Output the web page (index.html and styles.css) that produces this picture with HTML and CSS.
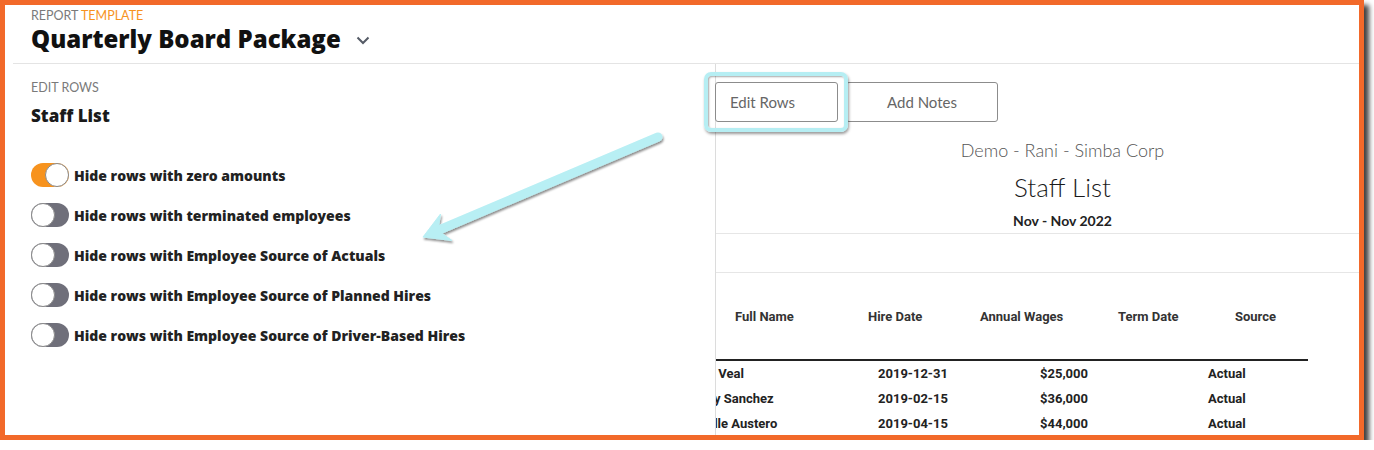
FILE: index.html
```html
<!DOCTYPE html>
<html lang="en">
<head>
    <meta charset="UTF-8">
    <title>Quarterly Board Package - Edit Rows</title>
    <link rel="stylesheet" href="styles.css">
</head>
<body>
    <div class="frame">
        <div class="top">
            <div class="kicker">Report <span class="accent">Template</span></div>
            <h1 class="title">Quarterly Board Package
                <svg class="chevron" width="14" height="9" viewBox="0 0 14 9" fill="none" stroke="#555b66" stroke-width="2"><polyline points="1.5,1.5 7,7 12.5,1.5"></polyline></svg>
            </h1>
        </div>

        <div class="main">
            <div class="edit">
                <div class="kicker">Edit Rows</div>
                <h2 class="edit-title">Staff List</h2>

                <ul class="toggles">
                    <li><span class="switch on"><span class="knob"></span></span>Hide rows with zero amounts</li>
                    <li><span class="switch"><span class="knob"></span></span>Hide rows with terminated employees</li>
                    <li><span class="switch"><span class="knob"></span></span>Hide rows with Employee Source of Actuals</li>
                    <li><span class="switch"><span class="knob"></span></span>Hide rows with Employee Source of Planned Hires</li>
                    <li><span class="switch"><span class="knob"></span></span>Hide rows with Employee Source of Driver-Based Hires</li>
                </ul>
            </div>

            <div class="report">
                <div class="actions">
                    <button class="btn btn-edit">Edit Rows</button>
                    <button class="btn btn-notes">Add Notes</button>
                    <div class="highlight"></div>
                </div>

                <div class="report-head">
                    <div class="company">Demo - Rani - Simba Corp</div>
                    <div class="report-title">Staff List</div>
                    <div class="period">Nov - Nov 2022</div>
                </div>
                <div class="spacer"></div>

                <div class="table-clip">
                    <div class="table">
                        <div class="row head">
                            <div class="c-name">Full Name</div>
                            <div class="c-hire">Hire Date</div>
                            <div class="c-wage">Annual Wages</div>
                            <div class="c-term">Term Date</div>
                            <div class="c-src">Source</div>
                        </div>
                        <div class="row">
                            <div class="c-name">Derek Veal</div>
                            <div class="c-hire">2019-12-31</div>
                            <div class="c-wage">$25,000</div>
                            <div class="c-term"></div>
                            <div class="c-src">Actual</div>
                        </div>
                        <div class="row">
                            <div class="c-name">Mandy Sanchez</div>
                            <div class="c-hire">2019-02-15</div>
                            <div class="c-wage">$36,000</div>
                            <div class="c-term"></div>
                            <div class="c-src">Actual</div>
                        </div>
                        <div class="row">
                            <div class="c-name">Danielle Austero</div>
                            <div class="c-hire">2019-04-15</div>
                            <div class="c-wage">$44,000</div>
                            <div class="c-term"></div>
                            <div class="c-src">Actual</div>
                        </div>
                    </div>
                </div>
            </div>
        </div>

        <!-- callout arrow pointing at the toggles -->
        <svg class="callout" width="260" height="130" viewBox="0 0 260 130">
            <defs>
                <filter id="drop" x="-10%" y="-20%" width="130%" height="150%">
                    <feDropShadow dx="1" dy="2" stdDeviation="1.2" flood-color="#000" flood-opacity="0.45"></feDropShadow>
                </filter>
            </defs>
            <g filter="url(#drop)" fill="#b8eff4" stroke="#b8eff4">
                <line x1="243" y1="12" x2="24" y2="105" stroke-width="9" stroke-linecap="round"></line>
                <polygon points="8,112 25.5,89 23,105.5 37,115.5" stroke-width="1" stroke-linejoin="round"></polygon>
            </g>
        </svg>
    </div>
</body>
</html>
```

FILE: styles.css
```css
* {
    box-sizing: border-box;
}

body {
    margin: 0;
    font-family: 'Lato', 'Open Sans', sans-serif;
    color: #222;
    background: #fff;
}

.frame {
    position: relative;
    width: 1364px;
    height: 440px;
    border: 5px solid #f2692a;
    background: #fff;
    box-shadow: 5px 5px 5px rgba(0, 0, 0, 0.75);
    overflow: hidden;
}

/* header */
.top {
    height: 59px;
    margin-left: 8px;
    padding: 4px 0 0 18px;
    border-bottom: 1px solid #e4e4e4;
}

.kicker {
    font-size: 12.5px;
    line-height: 14px;
    text-transform: uppercase;
    color: #7a7a7a;
}

.kicker .accent {
    color: #f7931e;
}

.title {
    margin: 1px 0 0;
    font-family: 'Open Sans', sans-serif;
    font-size: 24px;
    line-height: 30px;
    font-weight: 800;
    color: #111;
    display: flex;
    align-items: center;
}

.chevron {
    margin-left: 15px;
    margin-top: 2px;
}

.main {
    display: flex;
    height: 371px;
}

/* left: edit rows */
.edit {
    width: 710px;
    padding: 17px 0 0 26px;
}

.edit-title {
    margin: 10px 0 0;
    font-family: 'Open Sans', sans-serif;
    font-size: 17px;
    line-height: 22px;
    font-weight: 800;
    color: #1a1a1a;
}

.toggles {
    list-style: none;
    margin: 36px 0 0;
    padding: 0;
    display: flex;
    flex-direction: column;
    gap: 16px;
}

.toggles li {
    display: flex;
    align-items: center;
    height: 24px;
    font-family: 'Open Sans', sans-serif;
    font-size: 14px;
    font-weight: 800;
    color: #222;
}

.switch {
    position: relative;
    width: 38px;
    height: 24px;
    margin-right: 5px;
    border-radius: 12px;
    background: #6f6f7a;
}

.switch.on {
    background: #f7931e;
}

.knob {
    position: absolute;
    top: 0;
    left: 0;
    width: 24px;
    height: 24px;
    border-radius: 50%;
    background: #fff;
    border: 1px solid #8a8a8a;
}

.switch.on .knob {
    left: 14px;
}

/* right: report preview */
.report {
    flex: 1;
    border-left: 1px solid #dcdcdc;
}

.actions {
    position: relative;
    display: flex;
    gap: 8px;
    padding-top: 18px;
}

.btn {
    height: 40px;
    background: #fff;
    border: 1px solid #8c8c8c;
    border-radius: 3px;
    font-family: 'Lato', sans-serif;
    font-size: 15px;
    color: #666;
}

.btn-edit {
    width: 123px;
    margin-left: -1px;
    text-align: left;
    padding-left: 14px;
}

.btn-notes {
    width: 152px;
}

.highlight {
    position: absolute;
    left: -12px;
    top: 8px;
    width: 144px;
    height: 60px;
    border: 4px solid #b6eef3;
    border-radius: 7px;
    box-shadow: 1px 2px 3px rgba(0, 0, 0, 0.4), inset 1px 1px 2px rgba(0, 0, 0, 0.35);
}

.report-head {
    padding: 17px 0 4px 50px;
    text-align: center;
    border-bottom: 1px solid #e6e6e6;
}

.company {
    font-size: 18px;
    line-height: 22px;
    font-weight: 300;
    color: #555;
}

.report-title {
    margin-top: 11px;
    font-size: 26px;
    line-height: 30px;
    font-weight: 300;
    color: #1a1a1a;
}

.period {
    margin-top: 11px;
    font-size: 14px;
    line-height: 16px;
    font-weight: 700;
    color: #222;
}

.spacer {
    height: 39px;
    border-bottom: 1px solid #e6e6e6;
}

.table-clip {
    overflow: hidden;
}

.table {
    width: 652px;
    margin-left: -60px;
    font-family: 'Roboto', sans-serif;
    font-size: 13px;
    font-weight: 700;
    color: #222;
}

.row {
    display: grid;
    grid-template-columns: 205px 110px 130px 100px 107px;
    height: 25px;
    align-items: center;
}

.row.head {
    height: 88px;
    border-bottom: 2px solid #222;
    color: #333;
}

.c-name {
    padding-left: 25px;
    white-space: nowrap;
}

.c-hire {
    padding-left: 17px;
}

.c-wage {
    text-align: right;
    padding-right: 13px;
}

.c-src {
    padding-left: 7px;
}

.head .c-name {
    padding-left: 79px;
}

.head .c-hire {
    padding-left: 7px;
}

.head .c-wage {
    text-align: left;
    padding-left: 9px;
}

.head .c-term {
    padding-left: 17px;
}

.head .c-src {
    padding-left: 34px;
}

.callout {
    position: absolute;
    left: 410px;
    top: 120px;
}
```
